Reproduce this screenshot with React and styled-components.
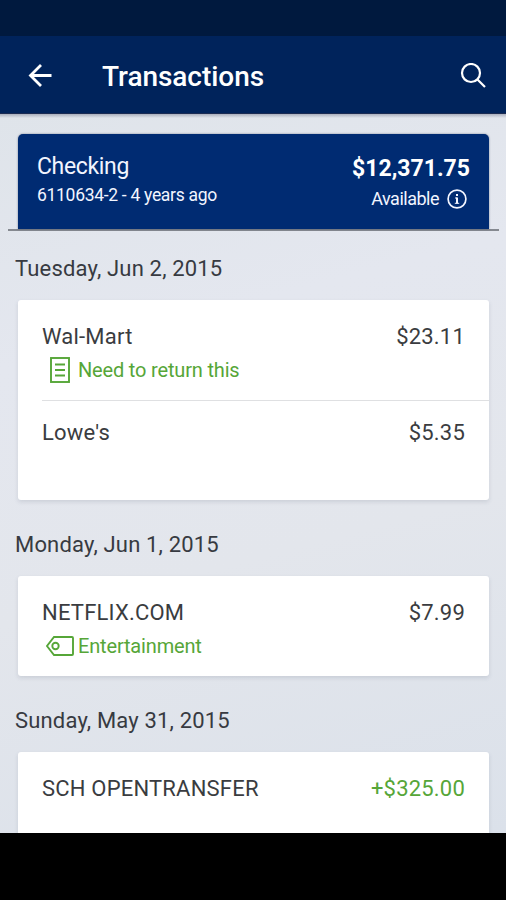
import styled, { createGlobalStyle } from 'styled-components'

const GlobalStyle = createGlobalStyle`
    * {
        box-sizing: border-box;
    }

    body {
        margin: 0;
        background-color: #000;
        font-family: Roboto, 'Liberation Sans', sans-serif;
    }
`

const Screen = styled.div`
    display: flex;
    flex-direction: column;
    width: 100%;
    height: 100vh;
    overflow: hidden;
    background-color: #000;
`

const StatusBar = styled.div`
    flex: none;
    height: 36px;
    background-color: #00193e;
`

const Header = styled.header`
    flex: none;
    display: flex;
    align-items: center;
    height: 78px;
    padding: 2px 20px 0 28px;
    background-color: #00235b;
    border-bottom: 1px solid #1b2b52;
    color: white;
`

const IconButton = styled.button`
    display: flex;
    padding: 0;
    border: none;
    background: none;
    color: inherit;
    cursor: pointer;
`

const Title = styled.h1`
    flex: 1;
    margin: 3px 0 0 50px;
    font-size: 28px;
    font-weight: 500;
    line-height: 32px;
    letter-spacing: -0.05px;
`

const Content = styled.main`
    flex: none;
    height: 719px;
    overflow: hidden;
    padding-top: 20px;
    background: linear-gradient(rgba(90, 95, 120, 0.4), rgba(90, 95, 120, 0) 4px),
        linear-gradient(165deg, #dfe4ea 0%, #e4e7ef 30%, #e3e6ec 60%, #dbe1ea 100%);
`

const AccountBar = styled.section`
    margin: 0 7px 0 8px;
    padding: 0 10px;
    border-bottom: 2px solid #858990;
`

const Account = styled.div`
    display: flex;
    justify-content: space-between;
    height: 95px;
    padding: 19px 19px 0;
    border-radius: 5px 5px 0 0;
    background-color: #002b72;
    box-shadow: 0 0 2px rgba(0, 20, 60, 0.5);
    color: #f2f5ff;
`

const AccountSide = styled.div`
    display: flex;
    flex-direction: column;
    align-items: ${(props) => (props.$end ? 'flex-end' : 'flex-start')};
`

const AccountName = styled.span`
    font-size: 23px;
    line-height: 28px;
    letter-spacing: -0.35px;
`

const AccountInfo = styled.span`
    font-size: 17.5px;
    line-height: 28px;
    letter-spacing: -0.3px;
`

const Balance = styled.span`
    font-size: 23px;
    font-weight: 700;
    line-height: 32px;
    color: white;
`

const Available = styled.span`
    display: flex;
    align-items: center;
    gap: 8px;
    padding-right: 3px;
    font-size: 18px;
    line-height: 28px;
    letter-spacing: -0.5px;
`

const DateTitle = styled.h2`
    display: flex;
    align-items: flex-end;
    height: ${(props) => (props.$first ? '69px' : '76px')};
    margin: 0;
    padding: 0 15px 17px;
    font-size: 22px;
    font-weight: 400;
    line-height: 28px;
    letter-spacing: 0.17px;
    color: #373a41;
`

const Card = styled.section`
    margin: 0 17px 0 18px;
    padding-left: 24px;
    border-radius: 3px;
    background-color: white;
    box-shadow: 0 2px 4px rgba(60, 70, 90, 0.14);
`

const Row = styled.div`
    display: flex;
    justify-content: space-between;
    height: 100px;
    padding: 23px 24px 0 0;
    font-size: 22px;
    line-height: 28px;
    letter-spacing: 0.2px;
    color: #3a3c40;

    & + & {
        padding-top: 18px;
        border-top: 1px solid #dfe0e2;
    }
`

const Amount = styled.span`
    color: ${(props) => (props.$credit ? '#56a638' : 'inherit')};
`

const Note = styled.div`
    display: flex;
    align-items: center;
    height: 28px;
    margin-top: 5px;
    font-size: 20px;
    letter-spacing: -0.17px;
    color: #56a638;
`

const NoteIcon = styled.span`
    display: flex;
    justify-content: flex-end;
    width: 36px;
    padding-right: ${(props) => props.$gap}px;
`

const BackIcon = () => (
    <svg width='24' height='24' viewBox='0 0 24 24' fill='none' stroke='currentColor' strokeWidth='2.8'>
        <path d='M23.5 11.5H3M13 1L2.5 11.5L13 22' />
    </svg>
)

const SearchIcon = () => (
    <svg width='26' height='26' viewBox='0 0 26 26' fill='none' stroke='currentColor' strokeWidth='2.2'>
        <circle cx='11' cy='10' r='9' />
        <path d='M17.5 16.5L25 24' />
    </svg>
)

const InfoIcon = () => (
    <svg width='20' height='20' viewBox='0 0 20 20' fill='none' stroke='currentColor' strokeWidth='1.7'>
        <circle cx='10' cy='10' r='8.9' />
        <path d='M10 8.5V14.5M10 5V7' strokeWidth='2' />
        <path d='M8 9H10M7.8 14.3H12.2' strokeWidth='1' />
    </svg>
)

const ReceiptIcon = () => (
    <svg width='20' height='26' viewBox='0 0 20 26' fill='none' stroke='currentColor' strokeWidth='1.9'>
        <rect x='1' y='1' width='18' height='24' />
        <path d='M5 7.5H15M5 13H15M5 18.5H15' />
    </svg>
)

const TagIcon = () => (
    <svg width='28' height='20' viewBox='0 0 28 20' fill='none' stroke='currentColor' strokeWidth='1.9'>
        <path d='M8 1H26Q27 1 27 2V18Q27 19 26 19H8L1 10Z' />
        <circle cx='9.5' cy='10' r='3.2' />
    </svg>
)

const icons = {
    note: { icon: <ReceiptIcon />, gap: 8 },
    category: { icon: <TagIcon />, gap: 4 },
}

const days = [
    {
        date: 'Tuesday, Jun 2, 2015',
        items: [
            { name: 'Wal-Mart', amount: '$23.11', note: 'Need to return this', type: 'note' },
            { name: "Lowe's", amount: '$5.35' },
        ],
    },
    {
        date: 'Monday, Jun 1, 2015',
        items: [{ name: 'NETFLIX.COM', amount: '$7.99', note: 'Entertainment', type: 'category' }],
    },
    {
        date: 'Sunday, May 31, 2015',
        items: [{ name: 'SCH OPENTRANSFER', amount: '+$325.00', credit: true }],
    },
]

export default function App() {
    return (
        <Screen>
            <GlobalStyle />
            <StatusBar />
            <Header>
                <IconButton aria-label='Back'>
                    <BackIcon />
                </IconButton>
                <Title>Transactions</Title>
                <IconButton aria-label='Search'>
                    <SearchIcon />
                </IconButton>
            </Header>
            <Content>
                <AccountBar>
                    <Account>
                        <AccountSide>
                            <AccountName>Checking</AccountName>
                            <AccountInfo>6110634-2 - 4 years ago</AccountInfo>
                        </AccountSide>
                        <AccountSide $end>
                            <Balance>$12,371.75</Balance>
                            <Available>
                                Available <InfoIcon />
                            </Available>
                        </AccountSide>
                    </Account>
                </AccountBar>
                {days.map((day, index) => (
                    <div key={day.date}>
                        <DateTitle $first={index === 0}>{day.date}</DateTitle>
                        <Card>
                            {day.items.map((item) => (
                                <Row key={item.name}>
                                    <div>
                                        {item.name}
                                        {item.note && (
                                            <Note>
                                                <NoteIcon $gap={icons[item.type].gap}>
                                                    {icons[item.type].icon}
                                                </NoteIcon>
                                                {item.note}
                                            </Note>
                                        )}
                                    </div>
                                    <Amount $credit={item.credit}>{item.amount}</Amount>
                                </Row>
                            ))}
                        </Card>
                    </div>
                ))}
            </Content>
        </Screen>
    )
}
